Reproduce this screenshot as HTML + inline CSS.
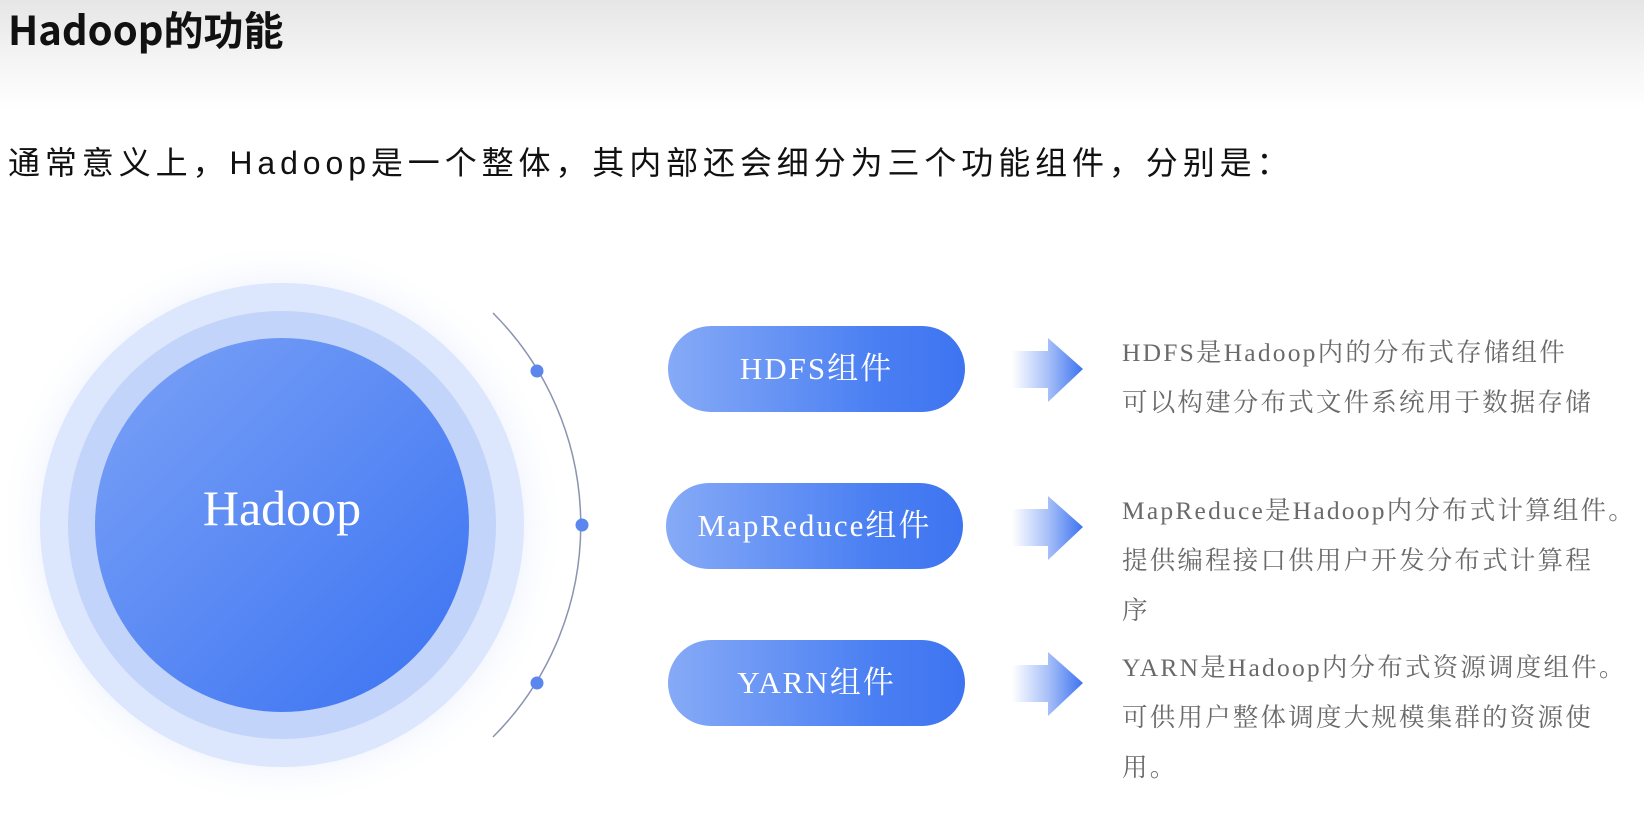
<!DOCTYPE html>
<html><head><meta charset="utf-8"><style>
html,body{margin:0;padding:0;}
body{width:1644px;height:839px;position:relative;overflow:hidden;background:#fff;font-family:"Liberation Sans","Noto Sans CJK SC",sans-serif;}
.hdr{position:absolute;left:0;top:0;width:1644px;height:110px;background:linear-gradient(#e6e6e6,#f6f6f6 60%,#fff);}
.title{position:absolute;left:8px;top:4px;font-size:40px;font-weight:bold;color:#111;line-height:48px;font-family:"Noto Sans CJK SC","Liberation Sans",sans-serif;}
.sub{position:absolute;left:8px;top:140px;font-size:32px;color:#111;letter-spacing:4.9px;line-height:46px;white-space:nowrap;}
.pill{position:absolute;width:297px;height:86px;border-radius:43px;background:linear-gradient(90deg,#86aaf6,#4a7ff3 70%,#3e74f0);color:#fff;font-family:"Liberation Serif","Noto Serif CJK SC",serif;font-size:31px;letter-spacing:2px;text-align:center;line-height:86px;}
.txt{position:absolute;left:1122px;font-family:"Liberation Serif","Noto Serif CJK SC",serif;font-size:25.5px;color:#6a6a6a;line-height:50px;white-space:nowrap;letter-spacing:2.2px;}
</style></head><body>
<div class="hdr"></div>
<div class="title">Hadoop的功能</div>
<div class="sub">通常意义上，Hadoop是一个整体，其内部还会细分为三个功能组件，分别是：</div>
<svg width="700" height="839" style="position:absolute;left:0;top:0">
<defs>
<radialGradient id="g0"><stop offset="0.75" stop-color="#e3ebfd"/><stop offset="1" stop-color="#fff" stop-opacity="0"/></radialGradient>
<linearGradient id="g1" x1="0" y1="0" x2="1" y2="1"><stop offset="0" stop-color="#7ba2f6"/><stop offset="1" stop-color="#3a72f2"/></linearGradient>
</defs>
<circle cx="282" cy="525" r="285" fill="url(#g0)"/>
<circle cx="282" cy="525" r="242" fill="#dce6fc"/>
<circle cx="282" cy="525" r="214" fill="#c3d4fa"/>
<circle cx="282" cy="525" r="187" fill="url(#g1)"/>
<text x="282" y="525" text-anchor="middle" fill="#fff" font-family="Liberation Serif,serif" font-size="50">Hadoop</text>
<path d="M493 313 A300 300 0 0 1 493 737" fill="none" stroke="#8a94b0" stroke-width="1.5"/>
<circle cx="537" cy="371" r="6.5" fill="#5b86ee"/>
<circle cx="582" cy="525" r="6.5" fill="#5b86ee"/>
<circle cx="537" cy="683" r="6.5" fill="#5b86ee"/>
</svg>
<div class="pill" style="left:668px;top:326px">HDFS组件</div>
<div class="pill" style="left:666px;top:483px">MapReduce组件</div>
<div class="pill" style="left:668px;top:640px">YARN组件</div>
<svg width="80" height="420" style="position:absolute;left:1008px;top:330px">
<defs><linearGradient id="ar" x1="0" x2="1"><stop offset="0" stop-color="#fff"/><stop offset="0.5" stop-color="#a9c1f8"/><stop offset="1" stop-color="#3d73f0"/></linearGradient></defs>
<g fill="url(#ar)">
<path d="M4 21 H40 V8 L75 39 L40 72 V58 H4 Z"/>
<path d="M4 179 H40 V166 L75 197 L40 230 V216 H4 Z"/>
<path d="M4 335 H40 V322 L75 353 L40 386 V372 H4 Z"/>
</g></svg>
<div class="txt" style="top:328px">HDFS是Hadoop内的分布式存储组件<br>可以构建分布式文件系统用于数据存储</div>
<div class="txt" style="top:486px">MapReduce是Hadoop内分布式计算组件。<br>提供编程接口供用户开发分布式计算程<br>序</div>
<div class="txt" style="top:643px">YARN是Hadoop内分布式资源调度组件。<br>可供用户整体调度大规模集群的资源使<br>用。</div>
</body></html>
